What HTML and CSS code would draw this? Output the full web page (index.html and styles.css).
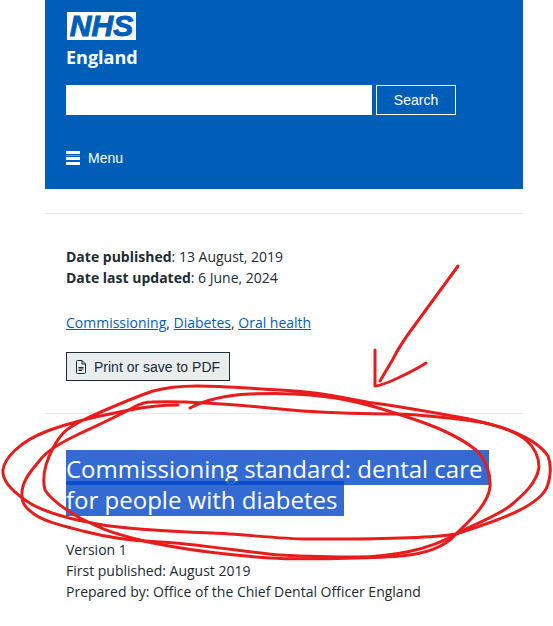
FILE: index.html
```
<!DOCTYPE html>
<html lang="en">
<head>
  <meta charset="utf-8">
  <meta name="viewport" content="width=device-width">
  <title>Commissioning standard: dental care for people with diabetes</title>
  <link rel="stylesheet" href="styles.css">
</head>
<body>

  <div class="page">

    <header class="header">
      <a href="#" class="logo">
        <span class="logo-nhs">NHS</span>
        <span class="logo-name">England</span>
      </a>

      <form class="search">
        <input type="text" class="search-field" aria-label="Search">
        <button type="button" class="search-button">Search</button>
      </form>

      <button type="button" class="menu">
        <svg width="14" height="14" viewBox="0 0 14 14" aria-hidden="true">
          <path d="M0 0h14v3H0zM0 6h14v3H0zM0 11h14v3H0z" fill="#fff"/>
          <path d="M0 4h14v1H0z" fill="#fff" opacity=".4"/>
        </svg>
        Menu
      </button>
    </header>

    <main>
      <section class="meta">
        <p><strong>Date published</strong>: 13 August, 2019<br>
        <strong>Date last updated</strong>: 6 June, 2024</p>
        <p class="topics"><a href="#">Commissioning</a>, <a href="#">Diabetes</a>, <a href="#">Oral health</a></p>
        <button type="button" class="print">
          <svg width="10" height="14" viewBox="0 0 10 14" aria-hidden="true">
            <path d="M1.500 .5h4.500l3.500 3.500v8.500q0 1-1 1h-7q-1 0-1-1v-11q0-1 1-1zM6 .5v3.500h3.500M2.500 7.500h5M2.500 9h5M2.500 10.500h3.500" fill="none" stroke="#212b32"/>
          </svg>
          Print or save to PDF
        </button>
      </section>

      <section class="document">
        <h1><span class="selected">Commissioning standard: dental care for people with diabetes</span></h1>
        <p>Version 1<br>
        First published: August 2019<br>
        Prepared by: Office of the Chief Dental Officer England</p>
      </section>
    </main>

  </div>

  <!-- pen marks over the page -->
  <svg class="ink" width="553" height="626" viewBox="0 0 553 626" aria-hidden="true">
    <path d="M458 266L409 333Q399 347 393 359L380 381M375 350V386Q381 386 400 377Q415 370 426 363"/>
    <path d="M190 408C207 399 228 395 250 394S290 393 310 395C345 398 370 405 398 414S455 433 476 450C486 460 491 474 490 487C488 505 468 522 456 534C444 548 425 554 400 556S300 560 270 558S180 550 140 540S93 524 80 518C66 510 52 501 45 490C42 478 44 465 53 448S68 428 83 420C105 410 130 399 153 391C185 382 225 387 280 390S350 400 373 403S450 415 473 420S535 436 548 456C552 466 550 478 548 484C543 505 500 520 456 534C420 540 330 539 306 539S240 534 213 533S130 530 97 524S40 511 25 500S2 480 3 470S17 442 50 430S110 414 130 410S165 405 178 405"/>
    <path d="M152 402C175 401 220 403 280 409S370 413 398 414S450 418 473 421C500 425 515 431 526 440C535 448 539 457 539 467C537 483 523 495 510 506C495 517 475 524 456 534C430 550 390 557 356 557S300 556 280 555S190 543 160 542S110 538 87 532S45 522 34 514S22 502 22 495C21 480 34 468 40 460S60 443 77 435S120 415 134 407Q143 402 152 402"/>
  </svg>

</body>
</html>
```
FILE: styles.css
```
* {
  box-sizing: border-box;
}

body {
  margin: 0;
  background: #fff;
  color: #212b32;
  font-family: "Open Sans", "Noto Sans", sans-serif;
  font-size: 14px;
  line-height: 21px;
  position: relative;
  overflow-x: hidden;
}

.page {
  padding: 0 30px 24px 45px;
}

p {
  margin: 0;
}

button {
  font-family: "Liberation Sans", Arial, sans-serif;
  font-size: 14px;
  cursor: pointer;
}

.header {
  background: #005eb8;
  color: #fff;
  padding: 12px 67px 20px 21px;
}

.logo {
  display: inline-flex;
  flex-direction: column;
  color: #fff;
  text-decoration: none;
}

.logo-nhs {
  width: 69px;
  height: 28px;
  margin-left: 1px;
  background: #fff;
  color: #005eb8;
  font: italic bold 30px/28px "Liberation Sans", Arial, sans-serif;
  text-align: center;
  -webkit-text-stroke: 1px #005eb8;
}

.logo-name {
  margin-top: 4px;
  font-size: 18px;
  font-weight: bold;
  line-height: 26px;
}

.search {
  display: flex;
  gap: 4px;
  margin-top: 15px;
}

.search-field {
  flex: 1;
  min-width: 0;
  height: 30px;
  padding: 0 8px;
  border: none;
  background: #fff;
}

.search-button {
  width: 80px;
  height: 30px;
  padding: 0;
  border: 1px solid #fff;
  background: none;
  color: #fff;
}

.menu {
  display: flex;
  align-items: center;
  gap: 8px;
  height: 22px;
  margin-top: 32px;
  padding: 0;
  border: none;
  background: none;
  color: #fff;
}

.meta,
.document {
  border-top: 1px solid #e8e8e8;
  padding-left: 21px;
  padding-right: 21px;
}

.meta {
  margin-top: 24px;
  padding-top: 32px;
}

.topics {
  margin-top: 24px;
}

.topics a {
  color: #005eb8;
}

.print {
  display: flex;
  align-items: center;
  gap: 8px;
  height: 29px;
  margin-top: 19px;
  padding: 0 9px;
  border: 1px solid #212b32;
  background: #e8edee;
  color: #212b32;
}

.document {
  margin-top: 32px;
  padding-top: 39px;
}

h1 {
  margin: 0 0 24px;
  font-size: 24px;
  font-weight: normal;
  line-height: 31px;
}

.selected {
  padding: 2px 7px 0 0;
  background: rgba(0, 70, 199, 0.8);
  color: #fff;
  -webkit-box-decoration-break: clone;
  box-decoration-break: clone;
}

.ink {
  position: absolute;
  top: 0;
  left: 0;
  fill: none;
  stroke: #e81c1c;
  stroke-width: 3;
  stroke-linecap: round;
  stroke-linejoin: round;
  pointer-events: none;
}
```
